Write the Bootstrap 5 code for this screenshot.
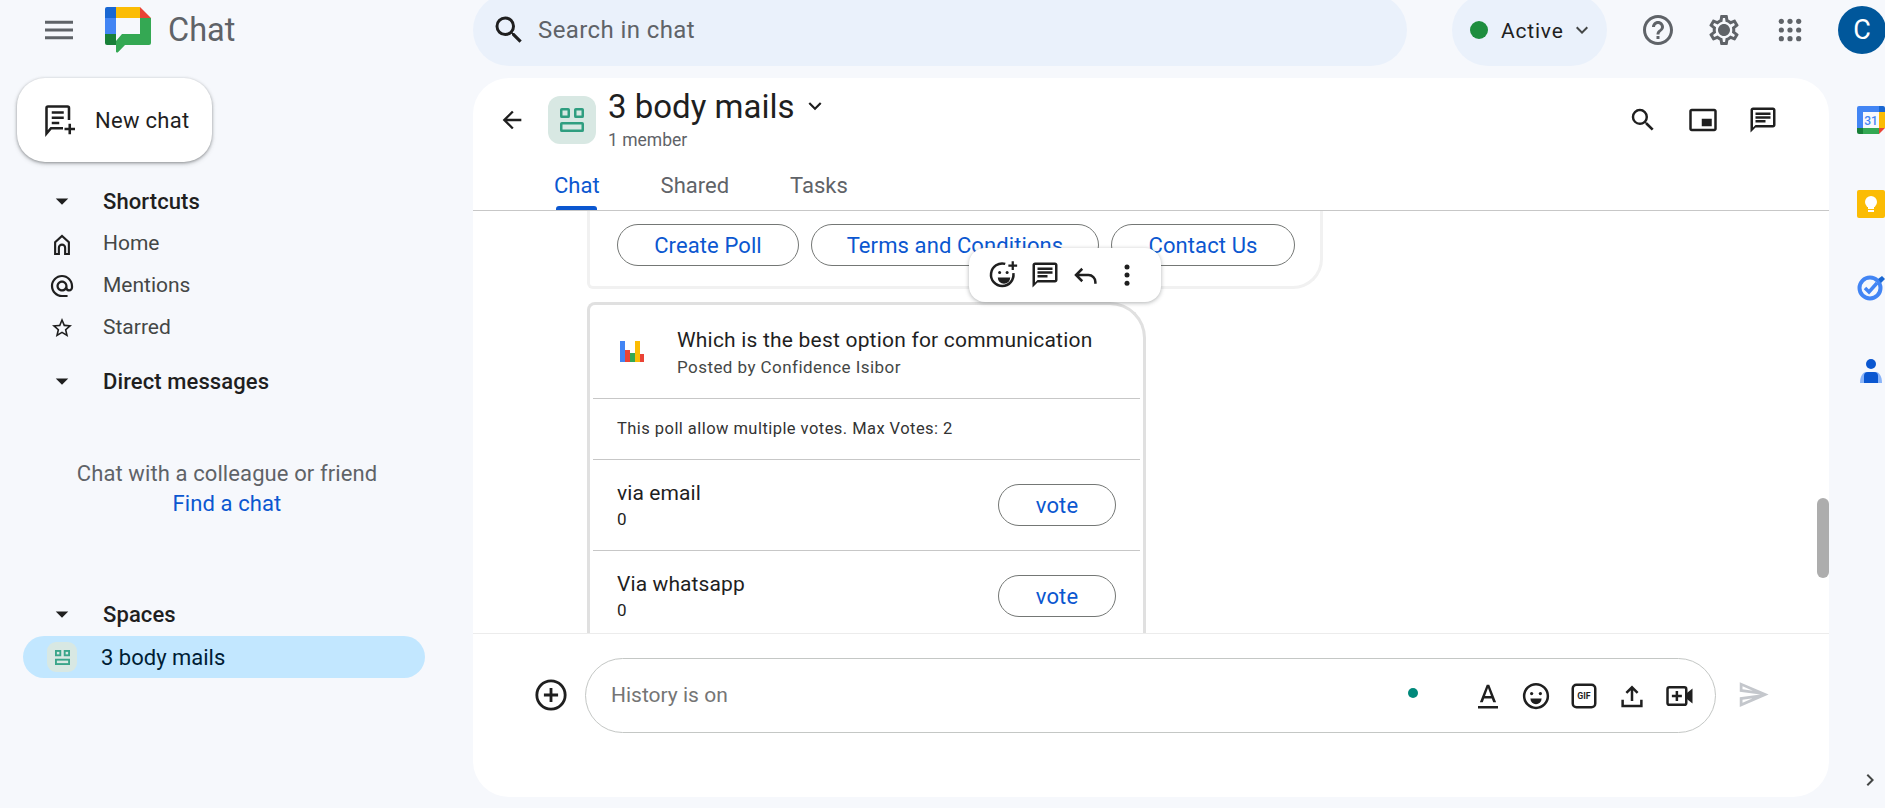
<!DOCTYPE html>
<html lang="en">
<head>
    <meta charset="UTF-8">
    <meta name="viewport" content="width=device-width, initial-scale=1.0">
    <title>Chat</title>
    <link rel="stylesheet" href="https://cdn.jsdelivr.net/npm/bootstrap@5.3.0/dist/css/bootstrap.min.css">
    <style>
        html, body { height: 100%; }
        body { background: #f6f8fc; color: #1f1f1f; font-family: Roboto, "Liberation Sans", sans-serif; overflow: hidden; }
        svg { display: block; flex: none; }
        .gc-top { height: 78px; }
        .gc-top > div { flex: none; }
        .gc-brand { width: 473px; padding-left: 45px; padding-bottom: 18px; }
        .gc-logo { margin-left: 32px; }
        .gc-logo-word { font-size: 32.5px; color: #5f6368; margin-left: 17px; }
        .gc-search { width: 934px; height: 72px; margin-top: -6px; background: #eaf1fb; border-radius: 36px; padding-left: 18px; font-size: 24px; letter-spacing: .4px; color: #5f6368; }
        .gc-search svg { margin-right: 11px; }
        .gc-status { width: 155px; height: 72px; margin-top: -6px; margin-left: 45px; background: #eaf1fb; border-radius: 36px; padding-left: 18px; font-size: 21px; letter-spacing: .8px; }
        .gc-status-word { padding-top: 3px; }
        .gc-dot { width: 18px; height: 18px; border-radius: 50%; background: #1e8e3e; margin-right: 13px; }
        .gc-status svg { margin-left: 6px; }
        .gc-actions { margin-top: -18px; }
        .gc-help { margin-left: 33px; }
        .gc-gear { margin-left: 30px; }
        .gc-grid { margin-left: 35px; }
        .gc-avatar { width: 48px; height: 48px; margin-left: 35px; border-radius: 50%; background: #00579b; color: #fff; font-size: 27px; }
        .gc-sidebar { width: 473px; flex: none; }
        .gc-new { width: 195px; height: 84px; margin-left: 17px; border-radius: 28px; background: #fff; box-shadow: 0 1px 3px rgba(60,64,67,.45), 0 2px 5px rgba(60,64,67,.2); padding-left: 25px; font-size: 22px; letter-spacing: .3px; }
        .gc-new svg { margin-right: 17px; }
        .gc-sec { height: 42px; padding-left: 47px; font-size: 21px; color: #444746; }
        .gc-sec b { font-size: 22px; letter-spacing: .1px; font-weight: 500; color: #1f1f1f; }
        .gc-sec svg { margin-right: 26px; }
        .gc-sec-first { margin-top: 18px; margin-bottom: 1px; }
        .gc-sec-dm { margin-top: 11px; }
        .gc-sec-spaces { margin-top: 74px; }
        .gc-empty { font-size: 22px; letter-spacing: .1px; line-height: 30px; width: 454px; margin-top: 57px; color: #5f6368; text-align: center; }
        .gc-empty a { color: #0b57d0; text-decoration: none; }
        .gc-room { width: 402px; height: 42px; margin-top: 1px; margin-left: 23px; border-radius: 21px; background: #c2e7ff; padding-left: 24px; font-size: 22px; color: #001d35; }
        .gc-tile { background: #d8e8e3; display: flex; align-items: center; justify-content: center; }
        .gc-tile-sm { width: 30px; height: 30px; border-radius: 9px; margin-right: 24px; }
        .gc-tile-lg { width: 48px; height: 48px; border-radius: 12px; margin-left: 22px; margin-right: 12px; }
        .gc-panel { width: 1356px; height: 719px; flex: none; border-radius: 36px; background: #fff; overflow: hidden; }
        .gc-head { height: 133px; border-bottom: 1px solid #c7c7c7; flex: none; }
        .gc-head-top { height: 48px; margin-top: 18px; padding-left: 25px; padding-right: 51px; }
        .gc-title { font-size: 33px; line-height: 34px; margin-top: -1px; }
        .gc-title svg { margin-left: 8px; margin-top: -2px; }
        .gc-members { font-size: 17.5px; line-height: 20px; color: #5f6368; margin-top: 6px; }
        .gc-head-tools { gap: 30px; }
        .gc-tabs { padding-left: 81px; gap: 61px; margin-top: 30px; font-size: 22px; color: #5f6368; }
        .gc-tab { position: relative; line-height: 24px; padding-bottom: 12px; }
        .gc-tab-on { color: #0b57d0; }
        .gc-tab-on::after { content: ""; position: absolute; left: 2px; right: 3px; bottom: 0; height: 4px; background: #0b57d0; border-radius: 3px 3px 0 0; }
        .gc-feed { position: relative; overflow: hidden; flex-grow: 1; padding-left: 114px; }
        .gc-msg { width: 736px; height: 78px; border: 3px solid #f1f1f1; border-top: 0; border-radius: 0 0 30px 6px; padding: 13px 0 0 27px; gap: 12px; }
        .gc-pill { height: 42px; border: 1px solid #747775; border-radius: 21px; color: #0b57d0; font-size: 22px; letter-spacing: .1px; display: flex; align-items: center; justify-content: center; background: #fff; }
        .gc-pill-poll { width: 182px; }
        .gc-pill-terms { width: 288px; }
        .gc-pill-contact { width: 184px; }
        .gc-tools { position: absolute; left: 496px; top: 37px; width: 192px; height: 54px; background: #fff; border-radius: 16px; box-shadow: 0 1px 4px rgba(60,64,67,.4); padding-left: 20px; gap: 11px; }
        .gc-poll { width: 559px; margin-top: 13px; border: 3px solid #e0e0e0; border-bottom: 0; border-radius: 8px 36px 0 0; }
        .gc-poll-head { height: 94px; margin: 0 3px; padding-left: 27px; padding-top: 5px; border-bottom: 1px solid #c7c7c7; }
        .gc-poll-head svg { margin-right: 33px; margin-top: -5px; }
        .gc-poll-name { font-size: 21px; letter-spacing: .2px; line-height: 27px; }
        .gc-poll-by { font-size: 17px; letter-spacing: .44px; line-height: 27px; color: #444746; }
        .gc-poll-note { height: 61px; margin: 0 3px; padding-left: 24px; border-bottom: 1px solid #c7c7c7; font-size: 16.5px; letter-spacing: .45px; color: #333; }
        .gc-opt { height: 91px; margin: 0 3px; padding: 0 24px; border-bottom: 1px solid #c7c7c7; }
        .gc-opt-name { font-size: 21px; letter-spacing: .1px; line-height: 30px; }
        .gc-opt-num { font-size: 17px; line-height: 22px; margin-bottom: 2px; }
        .gc-vote { width: 118px; }
        .gc-bar { position: absolute; right: 0; top: 287px; width: 12px; height: 80px; background: #adadad; border-radius: 6px; }
        .gc-compose { height: 164px; border-top: 1px solid #ececec; flex: none; padding-left: 61px; padding-top: 24px; }
        .gc-plus { margin-top: 20px; }
        .gc-input { width: 1131px; height: 75px; margin-left: 17px; border: 1px solid #c4c7c5; border-radius: 38px; padding-left: 25px; font-size: 21px; color: #757575; }
        .gc-input-tools { margin-left: auto; padding-right: 20px; gap: 18px; }
        .gc-spot { width: 10px; height: 10px; border-radius: 50%; background: #00897b; margin-right: 37px; margin-bottom: 6px; }
        .gc-send { margin-top: 20px; margin-left: 21px; }
        .gc-rail { width: 56px; height: 730px; flex: none; padding: 28px 0 16px 28px; gap: 56px; overflow: hidden; }
        .gc-rail-more { margin-top: auto; margin-left: 1px; }
    </style>
</head>
<body>
<!-- top bar -->
<div class="gc-top d-flex align-items-start">
    <div class="gc-brand d-flex align-items-center align-self-center">
        <svg width="28" height="28" viewBox="3 3 18 18" fill="#5f6368"><path d="M3 18h18v-2H3v2zm0-5h18v-2H3v2zm0-7v2h18V6H3z"/></svg>
        <svg class="gc-logo" width="46" height="46" viewBox="0 0 46 46">
            <path fill="#1967d2" d="M0 11V2a2 2 0 0 1 2-2h9v11z"/>
            <path fill="#fbbc04" d="M11 0h24v11H11z"/>
            <path fill="#ea4335" d="M35 0l11 11H35z"/>
            <path fill="#4285f4" d="M0 11h11v16H0z"/>
            <path fill="#188038" d="M0 27h11v11H2a2 2 0 0 1-2-2z"/>
            <path fill="#34a853" d="M35 11h11v25a2 2 0 0 1-2 2H20l-7 7.3c-.6.6-2 .2-2-.8V34l6-7h18z"/>
        </svg>
        <span class="gc-logo-word">Chat</span>
    </div>
    <div class="gc-search d-flex align-items-center">
        <svg width="36" height="36" viewBox="0 0 24 24" fill="#1f1f1f"><path d="M15.5 14h-.79l-.28-.27A6.471 6.471 0 0 0 16 9.5 6.5 6.5 0 1 0 9.5 16c1.61 0 3.09-.59 4.23-1.57l.27.28v.79l5 4.99L20.49 19l-4.99-5zm-6 0C7.01 14 5 11.99 5 9.5S7.01 5 9.5 5 14 7.01 14 9.5 11.99 14 9.5 14z"/></svg>
        <span>Search in chat</span>
    </div>
    <div class="gc-status d-flex align-items-center">
        <span class="gc-dot"></span>
        <span class="gc-status-word">Active</span>
        <svg width="24" height="24" viewBox="0 0 24 24" fill="#444746"><path d="M7.41 8.59L12 13.17l4.59-4.58L18 10l-6 6-6-6z"/></svg>
    </div>
    <div class="gc-actions d-flex align-items-center align-self-center">
        <svg class="gc-help" width="36" height="36" viewBox="0 0 24 24" fill="#5f6368"><path d="M11 18h2v-2h-2v2zm1-16C6.48 2 2 6.48 2 12s4.48 10 10 10 10-4.48 10-10S17.52 2 12 2zm0 18c-4.41 0-8-3.59-8-8s3.59-8 8-8 8 3.59 8 8-3.59 8-8 8zm0-14c-2.21 0-4 1.79-4 4h2c0-1.1.9-2 2-2s2 .9 2 2c0 2-3 1.75-3 5h2c0-2.25 3-2.5 3-5 0-2.21-1.79-4-4-4z"/></svg>
        <svg class="gc-gear" width="36" height="36" viewBox="0 0 24 24" fill="#5f6368"><path d="M19.43 12.98c.04-.32.07-.64.07-.98 0-.34-.03-.66-.07-.98l2.11-1.65c.19-.15.24-.42.12-.64l-2-3.46c-.09-.16-.26-.25-.44-.25-.06 0-.12.01-.17.03l-2.49 1c-.52-.4-1.08-.73-1.69-.98l-.38-2.65C14.46 2.18 14.25 2 14 2h-4c-.25 0-.46.18-.49.42l-.38 2.65c-.61.25-1.17.59-1.69.98l-2.49-1c-.06-.02-.12-.03-.18-.03-.17 0-.34.09-.43.25l-2 3.46c-.13.22-.07.49.12.64l2.11 1.65c-.04.32-.07.65-.07.98 0 .33.03.66.07.98l-2.11 1.65c-.19.15-.24.42-.12.64l2 3.46c.09.16.26.25.44.25.06 0 .12-.01.17-.03l2.49-1c.52.4 1.08.73 1.69.98l.38 2.65c.03.24.24.42.49.42h4c.25 0 .46-.18.49-.42l.38-2.65c.61-.25 1.17-.59 1.69-.98l2.49 1c.06.02.12.03.18.03.17 0 .34-.09.43-.25l2-3.46c.12-.22.07-.49-.12-.64l-2.11-1.65zm-1.98-1.71c.04.31.05.52.05.73 0 .21-.02.43-.05.73l-.14 1.13.89.7 1.08.84-.7 1.21-1.27-.51-1.04-.42-.9.68c-.43.32-.84.56-1.25.73l-1.06.43-.16 1.13-.2 1.35h-1.4l-.19-1.35-.16-1.13-1.06-.43c-.43-.18-.83-.41-1.23-.71l-.91-.7-1.06.43-1.27.51-.7-1.21 1.08-.84.89-.7-.14-1.13c-.03-.31-.05-.54-.05-.74s.02-.43.05-.73l.14-1.13-.89-.7-1.08-.84.7-1.21 1.27.51 1.04.42.9-.68c.43-.32.84-.56 1.25-.73l1.06-.43.16-1.13.2-1.35h1.39l.19 1.35.16 1.13 1.06.43c.43.18.83.41 1.23.71l.91.7 1.06-.43 1.27-.51.7 1.21-1.07.85-.89.7.14 1.13zM12 8c-2.21 0-4 1.79-4 4s1.79 4 4 4 4-1.79 4-4-1.79-4-4-4z"/></svg>
        <svg class="gc-grid" width="26" height="26" viewBox="0 0 24 24" fill="#5f6368"><circle cx="4" cy="4" r="2.4"/><circle cx="12" cy="4" r="2.4"/><circle cx="20" cy="4" r="2.4"/><circle cx="4" cy="12" r="2.4"/><circle cx="12" cy="12" r="2.4"/><circle cx="20" cy="12" r="2.4"/><circle cx="4" cy="20" r="2.4"/><circle cx="12" cy="20" r="2.4"/><circle cx="20" cy="20" r="2.4"/></svg>
        <div class="gc-avatar d-flex align-items-center justify-content-center">C</div>
    </div>
</div>

<div class="d-flex">
    <!-- sidebar -->
    <div class="gc-sidebar d-flex flex-column">
        <div class="gc-new d-flex align-items-center">
            <svg width="36" height="36" viewBox="0 0 24 24" fill="none" stroke="#1f1f1f" stroke-width="1.7"><path d="M18 12V4a1 1 0 0 0-1-1H4a1 1 0 0 0-1 1v17l3-3.5h8"/><path d="M6.5 7h8M6.5 10.5h8M6.5 14h5M18.5 14.5v7M15 18h7"/></svg>
            <span>New chat</span>
        </div>
        <div class="gc-sec gc-sec-first d-flex align-items-center">
            <svg width="30" height="30" viewBox="0 0 24 24" fill="#1f1f1f"><path d="M7 10l5 5 5-5z"/></svg><b>Shortcuts</b>
        </div>
        <div class="gc-sec d-flex align-items-center">
            <svg width="30" height="30" viewBox="0 0 24 24" fill="none" stroke="#1f1f1f" stroke-width="1.7"><path d="M6.5 20V10.5L12 5.500l5.500 5V20h-3v-5a2.500 2.500 0 0 0-5 0v5z"/></svg>Home
        </div>
        <div class="gc-sec d-flex align-items-center">
            <svg width="30" height="30" viewBox="-1.5 -1.5 27 27" fill="#1f1f1f"><path d="M12 2C6.48 2 2 6.48 2 12s4.48 10 10 10h5v-2h-5c-4.34 0-8-3.66-8-8s3.66-8 8-8 8 3.66 8 8v1.43c0 .79-.71 1.57-1.5 1.57s-1.5-.78-1.5-1.57V12c0-2.76-2.24-5-5-5s-5 2.24-5 5 2.24 5 5 5c1.38 0 2.64-.56 3.54-1.47.65.89 1.77 1.47 2.96 1.47 1.97 0 3.5-1.6 3.5-3.57V12c0-5.52-4.48-10-10-10zm0 13c-1.66 0-3-1.34-3-3s1.34-3 3-3 3 1.34 3 3-1.34 3-3 3z"/></svg>Mentions
        </div>
        <div class="gc-sec d-flex align-items-center">
            <svg width="30" height="30" viewBox="-3 -3 30 30" fill="#1f1f1f"><path d="M22 9.24l-7.19-.62L12 2 9.19 8.63 2 9.24l5.46 4.73L5.82 21 12 17.27 18.18 21l-1.63-7.03L22 9.24zM12 15.4l-3.76 2.27 1-4.28-3.32-2.88 4.38-.38L12 6.1l1.71 4.04 4.38.38-3.32 2.88 1 4.28L12 15.4z"/></svg>Starred
        </div>
        <div class="gc-sec gc-sec-dm d-flex align-items-center">
            <svg width="30" height="30" viewBox="0 0 24 24" fill="#1f1f1f"><path d="M7 10l5 5 5-5z"/></svg><b>Direct messages</b>
        </div>
        <div class="gc-empty">
            <div>Chat with a colleague or friend</div>
            <a href="#">Find a chat</a>
        </div>
        <div class="gc-sec gc-sec-spaces d-flex align-items-center">
            <svg width="30" height="30" viewBox="0 0 24 24" fill="#1f1f1f"><path d="M7 10l5 5 5-5z"/></svg><b>Spaces</b>
        </div>
        <div class="gc-room d-flex align-items-center">
            <div class="gc-tile gc-tile-sm">
                <svg width="15" height="15" viewBox="0 0 24 24" fill="none" stroke="#3aa58a" stroke-width="3"><rect x="1.5" y="1.5" width="7" height="7"/><rect x="15.5" y="1.5" width="7" height="7"/><rect x="1.5" y="15.5" width="21" height="7"/></svg>
            </div>
            <span>3 body mails</span>
        </div>
    </div>

    <!-- chat panel -->
    <div class="gc-panel d-flex flex-column">
        <div class="gc-head">
            <div class="gc-head-top d-flex align-items-center">
                <svg width="28" height="28" viewBox="0 0 24 24" fill="#1f1f1f"><path d="M20 11H7.83l5.59-5.59L12 4l-8 8 8 8 1.41-1.41L7.83 13H20v-2z"/></svg>
                <div class="gc-tile gc-tile-lg">
                    <svg width="24" height="24" viewBox="0 0 24 24" fill="none" stroke="#2f9e80" stroke-width="2.5"><rect x="1.25" y="1.25" width="7.5" height="7.5" rx=".6"/><rect x="15.25" y="1.25" width="7.5" height="7.5" rx=".6"/><rect x="1.25" y="15.25" width="21.5" height="7.5" rx=".6"/></svg>
                </div>
                <div>
                    <div class="gc-title d-flex align-items-center">3 body mails
                        <svg width="26" height="26" viewBox="0 0 24 24" fill="#1f1f1f"><path d="M7.41 8.59L12 13.17l4.59-4.58L18 10l-6 6-6-6z"/></svg>
                    </div>
                    <div class="gc-members">1 member</div>
                </div>
                <div class="gc-head-tools d-flex align-items-center ms-auto">
                    <svg width="30" height="30" viewBox="0 0 24 24" fill="#1f1f1f"><path d="M15.5 14h-.79l-.28-.27A6.471 6.471 0 0 0 16 9.5 6.5 6.5 0 1 0 9.5 16c1.61 0 3.09-.59 4.23-1.57l.27.28v.79l5 4.99L20.49 19l-4.99-5zm-6 0C7.01 14 5 11.99 5 9.5S7.01 5 9.5 5 14 7.01 14 9.5 11.99 14 9.5 14z"/></svg>
                    <svg width="30" height="30" viewBox="0 0 24 24" fill="#1f1f1f"><path d="M19 11h-8v6h8v-6zm4 8V4.98C23 3.88 22.1 3 21 3H3c-1.1 0-2 .88-2 1.98V19c0 1.1.9 2 2 2h18c1.1 0 2-.9 2-2zm-2 .02H3V4.97h18v14.05z"/></svg>
                    <svg width="30" height="30" viewBox="0 0 24 24" fill="#1f1f1f"><path d="M20 2H4c-1.1 0-2 .9-2 2v18l4-4h14c1.1 0 2-.9 2-2V4c0-1.1-.9-2-2-2zm0 14H6l-2 2V4h16v12zM6 12h8v2H6zM6 9h12v2H6zM6 6h12v2H6z"/></svg>
                </div>
            </div>
            <div class="gc-tabs d-flex">
                <div class="gc-tab gc-tab-on">Chat</div>
                <div class="gc-tab">Shared</div>
                <div class="gc-tab">Tasks</div>
            </div>
        </div>

        <div class="gc-feed">
            <div class="gc-msg d-flex">
                <div class="gc-pill gc-pill-poll">Create Poll</div>
                <div class="gc-pill gc-pill-terms">Terms and Conditions</div>
                <div class="gc-pill gc-pill-contact">Contact Us</div>
            </div>
            <div class="gc-tools d-flex align-items-center">
                <svg width="30" height="30" viewBox="0 0 24 24" fill="none" stroke="#1f1f1f" stroke-width="2"><path d="M19.5 10.5A9 9 0 1 1 13 3.1"/><circle cx="8.5" cy="10" r="1.2" fill="#1f1f1f" stroke="none"/><circle cx="14.5" cy="10" r="1.2" fill="#1f1f1f" stroke="none"/><path fill="#1f1f1f" stroke="none" d="M7 14h10a5 5 0 0 1-10 0z"/><path d="M19 1v7M15.5 4.5h7" stroke-width="1.8"/></svg>
                <svg width="30" height="30" viewBox="0 0 24 24" fill="#1f1f1f"><path d="M20 2H4c-1.1 0-2 .9-2 2v18l4-4h14c1.1 0 2-.9 2-2V4c0-1.1-.9-2-2-2zm0 14H6l-2 2V4h16v12zM6 12h8v2H6zM6 9h12v2H6zM6 6h12v2H6z"/></svg>
                <svg width="30" height="30" viewBox="0 0 24 24" fill="none" stroke="#1f1f1f" stroke-width="2"><path d="M9 7l-5 5 5 5M4 12h10a5.5 5.5 0 0 1 5.5 5.5V19"/></svg>
                <svg width="30" height="30" viewBox="0 0 24 24" fill="#1f1f1f"><circle cx="12" cy="5.5" r="2"/><circle cx="12" cy="12" r="2"/><circle cx="12" cy="18.5" r="2"/></svg>
            </div>

            <div class="gc-poll">
                <div class="gc-poll-head d-flex align-items-center">
                    <svg width="24" height="21" viewBox="0 0 24 21">
                        <rect x="0" y="0" width="5" height="21" fill="#4285f4"/>
                        <rect x="5" y="9" width="5" height="12" fill="#ea4335"/>
                        <rect x="10" y="12" width="5" height="9" fill="#34a853"/>
                        <rect x="15" y="0" width="5" height="21" fill="#fbbc04"/>
                        <rect x="20" y="13" width="4" height="8" fill="#ea4335"/>
                    </svg>
                    <div>
                        <div class="gc-poll-name">Which is the best option for communication</div>
                        <div class="gc-poll-by">Posted by Confidence Isibor</div>
                    </div>
                </div>
                <div class="gc-poll-note d-flex align-items-center">This poll allow multiple votes. Max Votes: 2</div>
                <div class="gc-opt d-flex align-items-center justify-content-between">
                    <div><div class="gc-opt-name">via email</div><div class="gc-opt-num">0</div></div>
                    <div class="gc-pill gc-vote">vote</div>
                </div>
                <div class="gc-opt d-flex align-items-center justify-content-between">
                    <div><div class="gc-opt-name">Via whatsapp</div><div class="gc-opt-num">0</div></div>
                    <div class="gc-pill gc-vote">vote</div>
                </div>
            </div>
            <div class="gc-bar"></div>
        </div>

        <div class="gc-compose d-flex align-items-start">
            <svg class="gc-plus" width="34" height="34" viewBox="0 0 24 24" fill="none" stroke="#1f1f1f" stroke-width="2"><circle cx="12" cy="12" r="10"/><path d="M12 7v10M7 12h10"/></svg>
            <div class="gc-input d-flex align-items-center">
                <span>History is on</span>
                <div class="gc-input-tools d-flex align-items-center">
                    <span class="gc-spot"></span>
                    <svg width="30" height="30" viewBox="0 0 24 24" fill="#1f1f1f"><path d="M11 3L5.5 17h2.31l1.12-3h6.12l1.12 3h2.31L13 3h-2zm-1.38 9L12 5.67 14.38 12H9.62zM4 20h16v2H4z"/></svg>
                    <svg width="30" height="30" viewBox="0 0 24 24" fill="none" stroke="#1f1f1f" stroke-width="2"><circle cx="12" cy="12" r="9.5"/><circle cx="8.5" cy="10" r="1.3" fill="#1f1f1f" stroke="none"/><circle cx="15.5" cy="10" r="1.3" fill="#1f1f1f" stroke="none"/><path fill="#1f1f1f" stroke="none" d="M7.5 14h9a4.5 4.5 0 0 1-9 0z"/></svg>
                    <svg width="30" height="30" viewBox="0 0 24 24"><rect x="3" y="3" width="18" height="18" rx="3" fill="none" stroke="#1f1f1f" stroke-width="2"/><text x="12" y="14.7" text-anchor="middle" font-family="Roboto, sans-serif" font-weight="700" font-size="7" fill="#1f1f1f">GIF</text></svg>
                    <svg width="30" height="30" viewBox="0 0 24 24" fill="none" stroke="#1f1f1f" stroke-width="2"><path d="M4.5 15v5h15v-5M12 16V5M7.5 9.5L12 5l4.5 4.5"/></svg>
                    <svg width="30" height="30" viewBox="0 0 24 24"><rect x="2" y="5" width="15" height="14" rx="1.5" fill="none" stroke="#1f1f1f" stroke-width="2"/><path d="M9.5 8v8M5.5 12h8" stroke="#1f1f1f" stroke-width="2"/><path d="M17 10l5-4v12l-5-4z" fill="#1f1f1f"/></svg>
                </div>
            </div>
            <svg class="gc-send" width="33" height="33" viewBox="0 0 24 24" fill="#c4c7cc"><path d="M4 6.03l7.51 3.22-7.52-1 .01-2.22m7.5 8.72L4 17.97v-2.22l7.51-1M2.01 3L2 10l15 2-15 2 .01 7L23 12 2.01 3z"/></svg>
        </div>
    </div>

    <!-- side apps -->
    <div class="gc-rail d-flex flex-column">
        <svg width="28" height="28" viewBox="0 0 28 28">
            <path fill="#4285f4" d="M2 0h24v6H6v16H0V2a2 2 0 0 1 2-2z"/>
            <path fill="#1967d2" d="M22 0h4a2 2 0 0 1 2 2v4h-6z"/>
            <path fill="#fbbc04" d="M22 6h6v16h-6z"/>
            <path fill="#34a853" d="M6 22h16v6H6z"/>
            <path fill="#188038" d="M0 22h6v6H2a2 2 0 0 1-2-2z"/>
            <path fill="#ea4335" d="M22 22h6l-6 6z"/>
            <text x="14" y="19" text-anchor="middle" font-family="Roboto, sans-serif" font-weight="500" font-size="12" fill="#4285f4">31</text>
        </svg>
        <svg width="28" height="28" viewBox="0 0 28 28">
            <rect width="28" height="28" rx="2" fill="#fbbc04"/>
            <circle cx="14" cy="12" r="6" fill="#fff"/>
            <rect x="11" y="16" width="6" height="3" fill="#fff"/>
            <rect x="11" y="20" width="6" height="2" fill="#fff"/>
        </svg>
        <svg width="28" height="28" viewBox="0 0 28 28">
            <circle cx="13" cy="14" r="10.5" fill="none" stroke="#4285f4" stroke-width="4"/>
            <path d="M8 14l4 4 8-9" fill="none" stroke="#4285f4" stroke-width="3.5"/>
            <path d="M21 5l4-3 3 3-4 4z" fill="#1967d2"/>
        </svg>
        <svg width="28" height="28" viewBox="0 0 28 28">
            <circle cx="14" cy="6" r="5" fill="#0b57d0"/>
            <path d="M3 25c0-7 3-11 6-11h10c3 0 6 4 6 11z" fill="#8ab4f8"/>
            <path d="M7 25V18a4 4 0 0 1 4-4h6a4 4 0 0 1 4 4v7z" fill="#0b57d0"/>
        </svg>
        <svg class="gc-rail-more" width="24" height="24" viewBox="0 0 24 24" fill="#444746"><path d="M8.59 16.59L13.17 12 8.59 7.41 10 6l6 6-6 6z"/></svg>
    </div>
</div>

<script src="https://cdn.jsdelivr.net/npm/bootstrap@5.3.0/dist/js/bootstrap.bundle.min.js"></script>
</body>
</html>
